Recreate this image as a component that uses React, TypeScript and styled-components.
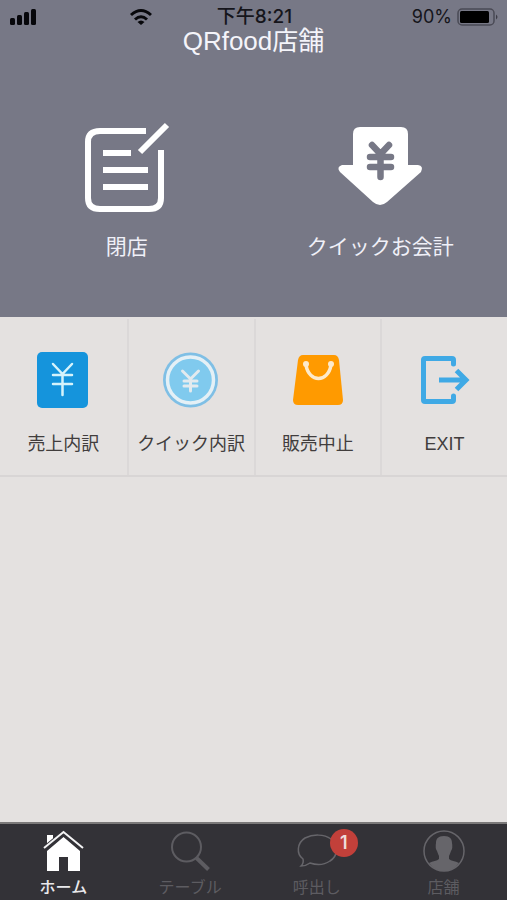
import React from "react";
import styled, { createGlobalStyle } from "styled-components";

const GlobalStyle = createGlobalStyle`
  * { box-sizing: border-box; }
  body {
    margin: 0;
    background: #e4e1e0;
    font-family: "Liberation Sans", "Noto Sans CJK JP", sans-serif;
  }
  button { font: inherit; border: 0; background: none; padding: 0; cursor: pointer; }
  svg { display: block; }
`;

const Screen = styled.div`
  display: flex;
  flex-direction: column;
  min-height: 100vh;
`;

const Hero = styled.header`
  background: #777886;
  color: #f4f4fa;
  padding: 6px 0 57px;
`;

const StatusBar = styled.div`
  display: grid;
  grid-template-columns: 1fr auto 1fr;
  align-items: center;
  height: 22px;
  padding: 0 8px 0 10px;
  color: #15151b;
  font-family: Inter, "Noto Sans CJK JP", sans-serif;
  font-size: 18px;
  line-height: 22px;
`;

const Signals = styled.div`
  display: flex;
  align-items: center;
  justify-content: space-between;
  padding-right: 64px;
`;

const Clock = styled.time`
  font-size: 19px;
  font-weight: 500;
`;

const Power = styled.div`
  display: flex;
  align-items: center;
  justify-content: flex-end;
  gap: 5px;
`;

const Title = styled.h1`
  margin: 0;
  font-size: 26px;
  font-weight: 400;
  line-height: 26px;
  text-align: center;
`;

const HeroActions = styled.div`
  display: grid;
  grid-template-columns: 1fr 1fr;
  padding-top: 68px;
`;

const HeroButton = styled.button`
  display: flex;
  flex-direction: column;
  align-items: center;
  gap: 20px;
  color: #f0f0f8;
  && { font-size: 21px; line-height: 26px; }
`;

const Tiles = styled.main`
  display: grid;
  grid-template-columns: repeat(4, 1fr);
  padding-top: 2px;
  border-bottom: 2px solid #d8d5d5;
`;

const Tile = styled.button`
  display: flex;
  flex-direction: column;
  align-items: center;
  gap: 22px;
  color: #413d3d;
  && {
    padding: 31px 0 19px;
    font-size: 18px;
    line-height: 24px;
    border-left: 2px solid #dbd8d8;
  }
  &&:first-child { border-left: 0; }
`;

const TabBar = styled.nav`
  display: grid;
  grid-template-columns: repeat(4, 1fr);
  margin-top: auto;
  background: #333237;
  border-top: 2px solid #7b7979;
`;

const TabButton = styled.button<{ $active?: boolean }>`
  display: flex;
  flex-direction: column;
  align-items: center;
  gap: 5px;
  color: ${(p) => (p.$active ? "#e9e9ec" : "#5d5c61")};
  && {
    padding: 5px 0 2px;
    font-size: 16px;
    font-weight: ${(p) => (p.$active ? 500 : 400)};
    line-height: 20px;
  }
`;

const IconSlot = styled.span`
  position: relative;
`;

const Badge = styled.span`
  position: absolute;
  top: 0;
  right: -17px;
  width: 28px;
  height: 28px;
  border-radius: 50%;
  background: #c2403a;
  color: #eedddc;
  font-family: Inter, sans-serif;
  font-size: 18px;
  font-weight: 600;
  line-height: 28px;
  text-align: center;
`;

const SignalIcon = () => (
  <svg width="28" height="18" viewBox="0 0 28 18" fill="#07070b" aria-hidden="true">
    <rect x="0" y="10" width="5" height="7" rx="1.5" />
    <rect x="7" y="7" width="5" height="10" rx="1.5" />
    <rect x="14" y="4" width="5" height="13" rx="1.5" />
    <rect x="21" y="1" width="5" height="16" rx="1.5" />
  </svg>
);

const WifiIcon = () => (
  <svg width="24" height="18" viewBox="0 0 24 18" fill="none" stroke="#07070b" strokeWidth="3" aria-hidden="true">
    <path d="M2 7Q12-2 22 7M6 11.500Q12 6 18 11.500" />
    <path d="M8.500 14Q12 11 15.500 14L12 17Z" fill="#07070b" stroke="none" />
  </svg>
);

const BatteryIcon = () => (
  <svg width="42" height="18" viewBox="0 0 42 18" aria-hidden="true">
    <rect x="1" y="1" width="36" height="16" rx="4" fill="none" stroke="#4a4a55" strokeWidth="1.5" />
    <rect x="3" y="3" width="29" height="12" rx="1.5" fill="#000" />
    <path d="M39 6.5Q42 9 39 11.5Z" fill="#3c3c46" />
  </svg>
);

const CloseShopIcon = () => (
  <svg width="88" height="92" viewBox="0 0 88 92" fill="none" stroke="#fff" strokeWidth="6" aria-hidden="true">
    <path d="M63 9H17Q5 9 5 20V76Q5 87 17 87H66Q78 87 78 76V28" />
    <path d="M57 30L84 3M20 31H48M20 48H65M20 65H65" />
  </svg>
);

const QuickPayIcon = () => (
  <svg width="88" height="92" viewBox="0 0 88 92" aria-hidden="true">
    <path
      fill="#fff"
      d="M24 5H65Q72 5 72 12V43H82Q88 44 85 50L51 80Q44 86 37 80L4 50Q0 45 6 43H17V12Q17 5 24 5Z"
    />
    <path
      d="M36 23L44.500 32L53 23M34 35H55M34 45H55M44.500 33V55"
      fill="none"
      stroke="#777886"
      strokeWidth="6.500"
      strokeLinecap="round"
    />
  </svg>
);

const SalesIcon = () => (
  <svg width="60" height="60" viewBox="0 0 60 60" aria-hidden="true">
    <rect x="4" y="2" width="51" height="56" rx="5" fill="#1594dc" />
    <path
      d="M20 14L29.500 24L39 14M20 25H39M20 34H39M29.500 24V45"
      fill="none"
      stroke="#d5f3fb"
      strokeWidth="2.500"
      strokeLinecap="round"
    />
  </svg>
);

const QuickDetailIcon = () => (
  <svg width="60" height="60" viewBox="0 0 60 60" aria-hidden="true">
    <circle cx="29.500" cy="30" r="27.500" fill="#7fbfe5" />
    <circle cx="29.500" cy="30" r="23" fill="#80caee" stroke="#e4f0f6" strokeWidth="3.500" />
    <path
      d="M21.500 21L29.500 29L37.500 21M23 31H36M23 36H36M29.500 29V41"
      fill="none"
      stroke="#e3eaee"
      strokeWidth="3"
      strokeLinecap="round"
    />
  </svg>
);

const BagIcon = () => (
  <svg width="60" height="60" viewBox="0 0 60 60" aria-hidden="true">
    <path fill="#ff9a00" d="M15 5H46Q50 5 51 10L55 50Q55 55 50 55H10Q5 55 5 50L10 10Q11 5 15 5Z" />
    <path d="M18 15C21 33 40 33 43 15" fill="none" stroke="#fdeacb" strokeWidth="3.500" />
    <circle cx="18" cy="14" r="3" fill="#fdeacb" />
    <circle cx="43" cy="14" r="3" fill="#fdeacb" />
  </svg>
);

const ExitIcon = () => (
  <svg width="60" height="60" viewBox="0 0 60 60" fill="none" stroke="#3fa9e5" strokeWidth="5" aria-hidden="true">
    <path d="M38.500 14V10Q38.500 8.500 37 8.500H10Q8.500 8.500 8.500 10V50Q8.500 51.500 10 51.500H37Q38.500 51.500 38.500 50V46" strokeLinecap="round" />
    <path d="M24 30H51M41.500 20.500L51 30L41.500 39.500" />
  </svg>
);

const HomeIcon = () => (
  <svg width="48" height="44" viewBox="0 0 48 44" aria-hidden="true">
    <path fill="#fff" d="M8 6H14V12L8 17ZM24.500 8L41 22V42H29V28H20V42H8V22Z" />
    <path d="M6 19L24.500 4L43 19" fill="none" stroke="#333237" strokeWidth="5" />
    <path d="M5 19L24.500 3L44 19" fill="none" stroke="#f4f4f5" strokeWidth="2" />
  </svg>
);

const SearchIcon = () => (
  <svg width="48" height="44" viewBox="0 0 48 44" fill="none" stroke="#5d5c61" aria-hidden="true">
    <circle cx="20.500" cy="18" r="14.500" strokeWidth="2" />
    <path d="M30.500 29L42.500 40.500" strokeWidth="4" />
  </svg>
);

const ChatIcon = () => (
  <svg width="48" height="44" viewBox="0 0 48 44" fill="none" stroke="#66656a" strokeWidth="1.500" aria-hidden="true">
    <path d="M10 30C3 25 4 14 12 9C20 5 31 5 38 10C46 16 45 27 37 32C31 36 23 36 17 34Q13 37 8 37Q11 34 10 30Z" />
  </svg>
);

const PersonIcon = () => (
  <svg width="48" height="44" viewBox="0 0 48 44" aria-hidden="true">
    <circle cx="24" cy="22" r="20" fill="none" stroke="#66656a" strokeWidth="1.500" />
    <path
      fill="#66656a"
      d="M24 7C30 7 32 10 32 14Q33 19 31 22Q30 25 29 27V30C31 32 35 32 39 34Q33 42 24 42Q15 42 9 34C13 32 17 32 19 30V27Q18 25 17 22Q15 19 16 14C16 10 18 7 24 7Z"
    />
  </svg>
);

const tiles = [
  { label: "売上内訳", Icon: SalesIcon },
  { label: "クイック内訳", Icon: QuickDetailIcon },
  { label: "販売中止", Icon: BagIcon },
  { label: "EXIT", Icon: ExitIcon },
];

const tabs = [
  { label: "ホーム", Icon: HomeIcon, active: true },
  { label: "テーブル", Icon: SearchIcon },
  { label: "呼出し", Icon: ChatIcon, count: 1 },
  { label: "店舗", Icon: PersonIcon },
];

export default function App() {
  return (
    <Screen>
      <GlobalStyle />
      <Hero>
        <StatusBar>
          <Signals>
            <SignalIcon />
            <WifiIcon />
          </Signals>
          <Clock>下午8:21</Clock>
          <Power>
            <span>90%</span>
            <BatteryIcon />
          </Power>
        </StatusBar>
        <Title>QRfood店舗</Title>
        <HeroActions>
          <HeroButton type="button">
            <CloseShopIcon />
            <span>閉店</span>
          </HeroButton>
          <HeroButton type="button">
            <QuickPayIcon />
            <span>クイックお会計</span>
          </HeroButton>
        </HeroActions>
      </Hero>
      <Tiles>
        {tiles.map(({ label, Icon }) => (
          <Tile type="button" key={label}>
            <Icon />
            <span>{label}</span>
          </Tile>
        ))}
      </Tiles>
      <TabBar>
        {tabs.map(({ label, Icon, active, count }) => (
          <TabButton type="button" key={label} $active={active} aria-current={active ? "page" : undefined}>
            <IconSlot>
              <Icon />
              {count && <Badge>{count}</Badge>}
            </IconSlot>
            <span>{label}</span>
          </TabButton>
        ))}
      </TabBar>
    </Screen>
  );
}
